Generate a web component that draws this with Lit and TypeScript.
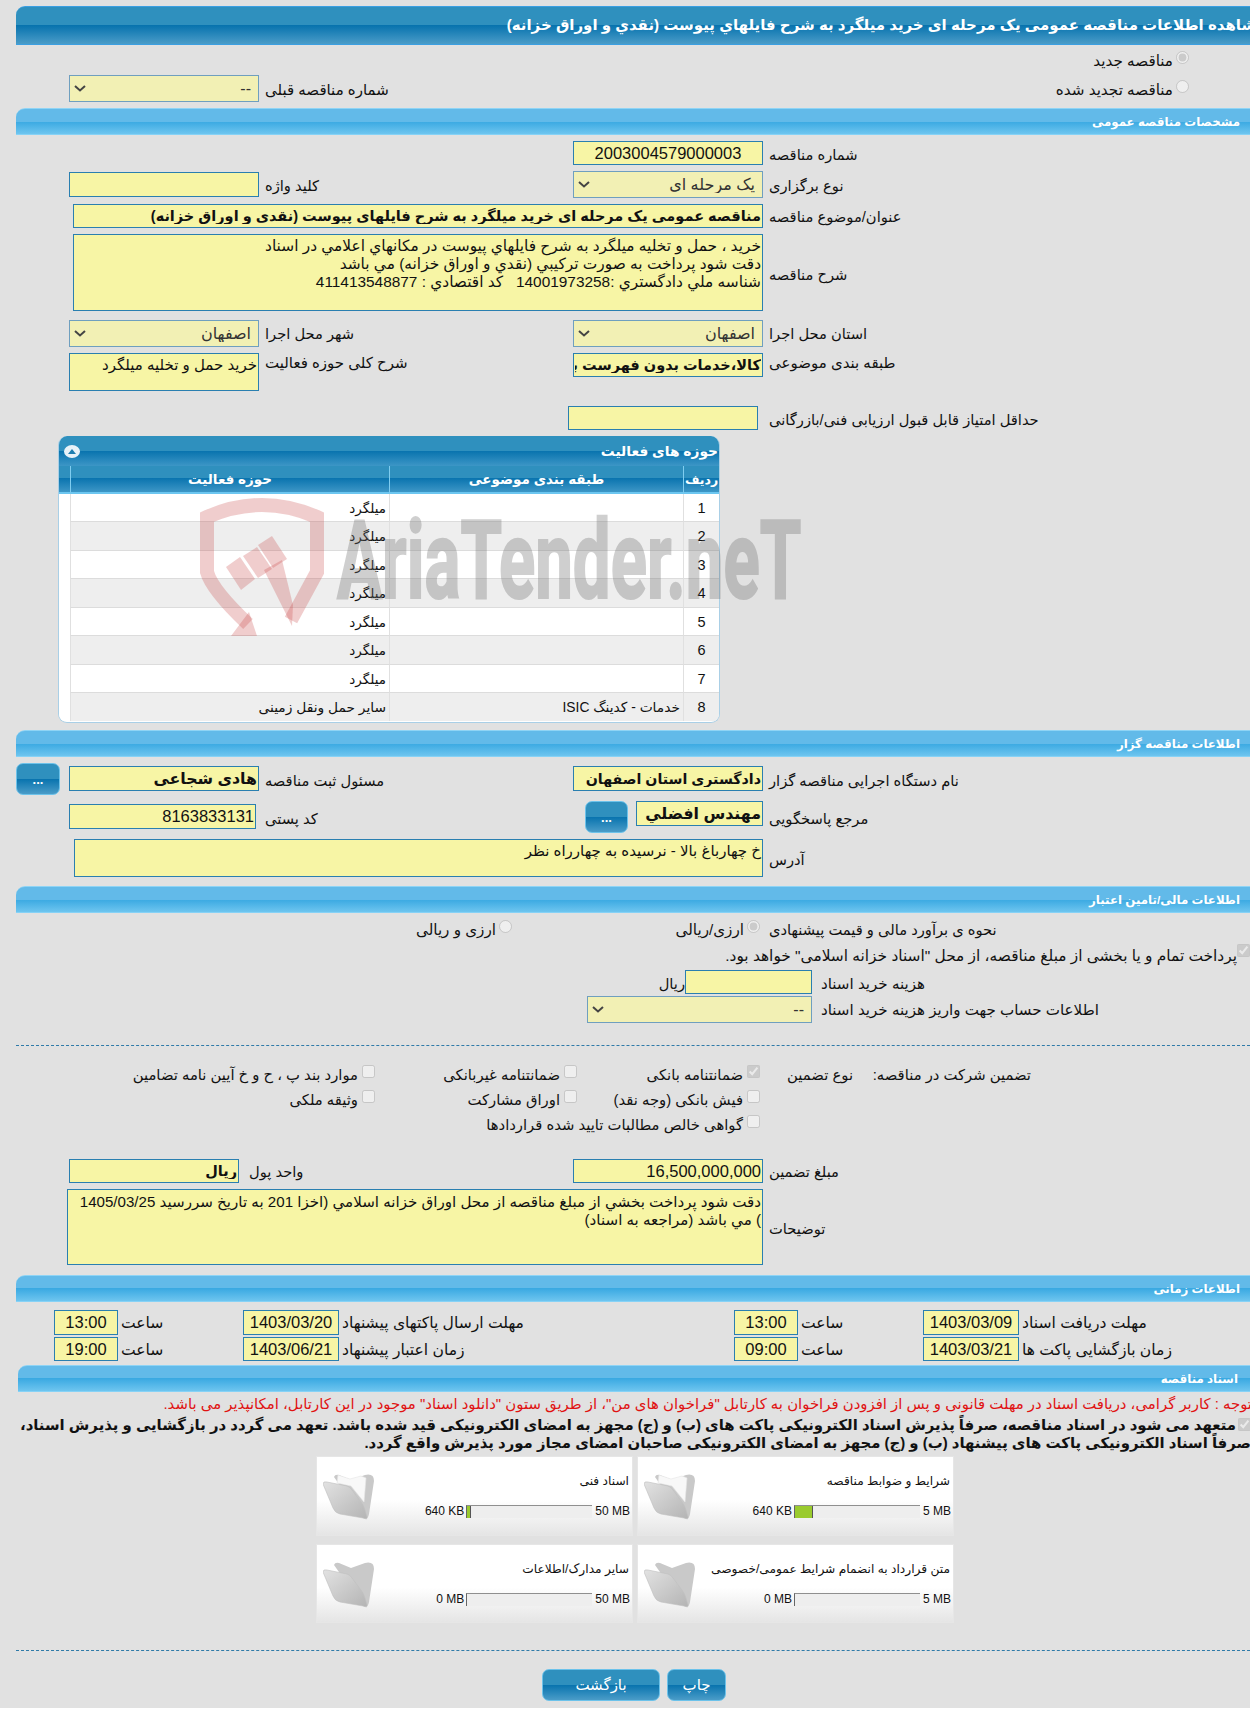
import { LitElement, html, css, svg } from "lit";
import { customElement } from "lit/decorators.js";

const folder = (paper: boolean) => html`<svg class="folder" viewBox="0 0 52 48" width="52" height="48">
  <defs><linearGradient id="fg" x1="0" y1="0" x2="1" y2="1"><stop offset="0" stop-color="#e2e2e2"/><stop offset="1" stop-color="#b4b4b4"/></linearGradient></defs>
  ${svg`<path d="M11 5 Q12 2 16 3 L28 8 L42 3 Q51 1 51 9 L46 42 Q45 48 40 46 Z" fill="#c9c9c9"/>`}
  ${paper ? svg`<path d="M15 3 L27 7 L38 4 L43 6 L41 30 L28 14 L14 11 Z" fill="#f8f8f8" stroke="#e6e6e6" stroke-width=".6"/>` : ""}
  ${svg`<path d="M0 12 Q0 9 4 10 L24 14 Q27 15 29 18 L38 30 Q41 34 42 38 L44 45 Q45 48 40 46 L17 42 Q12 41 10 36 Z" fill="url(#fg)" stroke="#bfbfbf" stroke-width=".6"/>`}
</svg>`;

@customElement("app-root")
export class AppRoot extends LitElement {
  static styles = css`
    :host{display:block;position:relative;width:1250px;height:1708px;overflow:hidden;background:#e1e1e1;color:#111;
      font-family:"Liberation Sans","DejaVu Sans",sans-serif;font-size:14.7px}
    .page{padding-top:6px;height:1702px}
    input,textarea,select,button{font-family:inherit;margin:0;box-sizing:border-box}
    .bar{margin-left:16px;height:27px;box-sizing:border-box;border-radius:9px 0 0 0;direction:rtl;color:#fff;font-weight:700;font-size:11.8px;
      line-height:26px;padding-right:10px;white-space:nowrap;border-top:1px solid #8fd4f5;border-bottom:1px solid #86d2f6;overflow:hidden;
      background:linear-gradient(#62bae9 0,#62bae9 50%,#3aa9e2 50%,#6ec5ef 100%)}
    .bar.main{height:39px;font-size:15px;line-height:36px;padding-right:0;margin-right:-16px;border-top-color:#3b9fe2;border-bottom-color:#3b9fe2;
      background:linear-gradient(#2f90be 0,#2f90be 50%,#0873ae 50%,#4a9cc8 100%)}
    .bar.docs{margin-left:18px;padding-right:12px}
    .mt4{margin-top:4px}.mt7{margin-top:7px}.mt9{margin-top:9px}.mt6{margin-top:6px}.mt10{margin-top:10px}
    .row{display:grid;grid-template-columns:69px 190px 314px 190px 1fr;align-items:start;direction:ltr;margin-top:6px}
    .row.mt9{margin-top:9px}.row.mt15{margin-top:15px}.row.mt19{margin-top:19px}.row.mt0{margin-top:0}
    .row>*{direction:rtl}
    .c1{grid-column:1}.c2{grid-column:2}.c3{grid-column:3}.c4{grid-column:4}.c5{grid-column:5}.span{grid-column:2 / 5}
    .lb{text-align:left;padding:2px 0 0 6px;line-height:24px;height:22px;white-space:nowrap}
    .lb.mid{align-self:center}
    .lb.p1{padding-top:1px}.lb.p3{padding-top:3px}.lb.p6{padding-top:6px}.lb.pm{padding-top:0;margin-top:-2px}
    .inp{display:block;width:100%;height:24px;border:1px solid #2a7fb0;background:#f7f5a5;padding:0 1px;color:#111;outline:none;font-size:14.5px;text-align:right;direction:rtl}
    .inp.h25{height:25px}.top1{margin-top:1px}.top3{margin-top:3px}
    .inp.num{font-size:16.5px}
    .inp.ctr{text-align:center}
    .inp.b{font-weight:700;font-size:14.5px}
    .inp.b.lg{font-size:15.8px}
    .inp.b.org{font-size:14.2px}
    textarea.inp{resize:none;overflow:hidden;line-height:18px;font-size:15.4px;white-space:pre-wrap;display:block;padding:2px 1px}
    textarea.d{height:77px}
    textarea.act{height:38px;font-size:15px}
    textarea.nt{height:76px;padding:3px 1px 0 5px;font-size:15.1px}
    .sel{display:block;width:100%;height:27px;appearance:none;-webkit-appearance:none;border:1px solid #6f9fbf;color:#333;opacity:1;font-size:16px;padding:0 7px 0 20px;
      background:#f2f0b4 url("data:image/svg+xml,%3Csvg xmlns='http://www.w3.org/2000/svg' width='12' height='7'%3E%3Cpath d='M1 1L6 5.5L11 1' fill='none' stroke='%23444' stroke-width='2'/%3E%3C/svg%3E") no-repeat 4px 50%}
    .ind4{margin-left:4px}
    .ad{margin-left:5px}
    .no{margin-left:-2px}
    .shift{margin-left:-5px}
    .pc{padding-right:3px;box-sizing:border-box}
    .unit{width:170px}
    .ul{margin-left:-16px}
    .lb.wide{font-size:15px}
    .rad{display:flex;direction:rtl;align-items:flex-start;white-space:nowrap;font-size:15.2px}
    .rad input{margin:0;width:13px;height:13px;flex:none}
    .rad span{margin-right:3px;line-height:24px;height:20px;margin-top:-2px}
    .radtop{padding:6px 61px 0 0;height:24px}
    .r2 .rad{padding:5px 61px 0 0}
    .btn{display:block;border:1px solid #6cc2ea;border-radius:7px;color:#fff;text-align:center;font-size:13px;padding:0;
      background:linear-gradient(#2f90be 0,#2f90be 50%,#0873ae 50%,#4a9cc8 100%)}
    .dots{width:44px;height:32px;margin-left:16px;font-weight:700}
    .contact{display:flex;direction:ltr;align-items:flex-start;padding-left:12px;gap:8px}
    .contact .dots{margin:0;width:43px;flex:none}
    .contact .inp{direction:rtl}
    .panel{position:relative;margin:6px 0 0 58px;width:662px;height:287px;box-sizing:border-box;border-radius:9px;overflow:hidden;direction:rtl;background:#fff;
      border:1px solid #a9cfe6;border-top:none}
    .cap{height:30px;display:flex;align-items:center;justify-content:space-between;color:#fff;font-weight:700;font-size:13.8px;padding:0 1px 0 5px;
      background:linear-gradient(#2f90be 0,#2f90be 50%,#0873ae 50%,#3d96c6 100%)}
    .tog{width:16px;height:13px;border-radius:50%;background:#e8f2f8;display:flex;align-items:center;justify-content:center}
    .tog i{display:block;width:0;height:0;border:4px solid transparent;border-top:none;border-bottom:5px solid #1f7eb0}
    table{border-collapse:separate;border-spacing:0;table-layout:fixed;width:660px;font-size:13.5px}
    th{height:28px;padding:0;box-sizing:border-box;color:#fff;font-weight:700;border-left:1px solid #7fcdf0;border-bottom:2px solid #6cc6f0;
      background:linear-gradient(#2f90be 0,#2f90be 45%,#0873ae 45%,#3d96c6 100%)}
    th:last-child,td:last-child{border-left:none}
    th.w1{font-size:12.5px}
    td{height:28px;padding:0 3px;box-sizing:border-box;border-left:1px solid #e0e0e0;border-bottom:1px solid #dcdcdc;text-align:right;white-space:nowrap}
    td.n{text-align:center;font-size:14.5px}
    tr:nth-child(even) td{height:29px;background:#eee}
    tr:last-child td{height:28px;border-bottom:none}
    tr td:last-child,tr:nth-child(even) td:last-child{background:#fff;border-bottom:none}
    .w1{width:36px}.w2{width:294px}.w3{width:319px}.w4{width:11px}
    .small{font-size:13.8px}
    .full{direction:rtl;display:flex;align-items:flex-start;white-space:nowrap;height:25px;font-size:15.4px}
    .full input{margin:0;width:13px;height:13px;flex:none}
    .full span{line-height:22px;height:22px;margin-top:1px}
    .fr1{display:grid;grid-template-columns:69px 190px 314px 190px 1fr;margin-top:5px;height:26px;align-items:start;direction:ltr}
    .fr1>*{direction:rtl}
    .fr1 .rad{padding-top:2px}
    .fr1 .rad.a{padding-right:3px}
    .fr1 .rad.b{padding-right:61px}
    .fr1 .lb{padding-top:0}
    .fin{display:grid;grid-template-columns:587px 225px 1fr;align-items:start;direction:ltr}
    .fin>*{direction:rtl}
    .fin .lb{padding-left:9px;font-size:15.1px}
    .fin .col2{grid-column:2}
    .cost{display:flex;align-items:center;height:24px}
    .cost .inp{width:127px;flex:none}
    .cost span{line-height:24px;margin-top:3px}
    .mt1{margin-top:1px}
    .mt2{margin-top:2px}
    .sep{margin:22px 0 0 16px;border-top:1px dashed #2f7aa8;height:0}
    .guar{display:grid;direction:rtl;grid-template-columns:178px 93px 183px 202px 1fr;padding-right:219px;grid-template-rows:25px 25px 25px;margin-top:19px;white-space:nowrap;font-size:14.8px}
    .guar .t{line-height:24px;height:24px;margin-top:-2px}
    .ck{display:flex;align-items:flex-start;height:25px}
    .ck input{margin:0;width:13px;height:13px;flex:none}
    .ck span{margin-right:4px;line-height:24px;height:24px;margin-top:-2px}
    .times{display:grid;direction:ltr;grid-template-columns:54px 64px 125px 96px 395px 64px 125px 96px 1fr;margin-top:8px;grid-template-rows:25px 24px;row-gap:2px;align-items:start}
    .times>*{direction:rtl}
    .times .inp{height:100%;font-size:16.5px;text-align:center;padding:0}
    .times .lb{padding:0 0 0 3px;line-height:25px;height:24px;font-size:15.6px}
    .g2{grid-column:2}.g3{grid-column:3}.g4{grid-column:4}.g5{grid-column:5}.g6{grid-column:6}.g7{grid-column:7}.g8{grid-column:8}.g9{grid-column:9}
    .red{color:#e01212;direction:rtl;white-space:nowrap;line-height:20px;height:20px;margin:2px -2px 0 0;font-size:14.9px}
    .consent{direction:rtl;margin:2px -1px 0 0;height:36px;font-weight:700;font-size:14.9px;line-height:18px;white-space:nowrap}
    .consent input{margin:0 0 0 2px;width:13px;height:13px;vertical-align:-1px}
    .cards{display:grid;direction:rtl;grid-template-columns:317px 317px;grid-template-rows:80px 79px;gap:8px 4px;margin:4px 0 0 316px;width:638px}
    .card{display:grid;grid-template-columns:1fr 56px;box-sizing:border-box;border:1px solid #e6e6e6;background:linear-gradient(#fff 0,#fff 55%,#e5e5e5 100%);padding:0 2px}
    .cbody{padding-top:14px;min-width:0}
    .ctitle{font-size:12.2px;line-height:20px;height:20px;text-align:right;white-space:nowrap;margin-right:1px}
    .prog{display:flex;direction:ltr;justify-content:flex-end;align-items:center;margin-top:13px;font-size:12px;height:14px;white-space:nowrap}
    .bar2{width:126px;height:13px;box-sizing:border-box;margin:0 3px 0 2px;background:#eee;border-top:1px solid #8f8f8f;border-left:1px solid #666;flex:none;display:flex}
    .fill{height:100%;background:#9acb2e;border-right:1px solid #555;box-sizing:border-box}
    .f1{width:18px}.f2{width:4px}
    .folder{margin-top:15px;display:block}
    .sep2{margin-top:27px}
    .foot{display:flex;gap:7px;margin:18px 0 0 542px}
    .foot .btn{height:32px;font-size:15px}
    .back{width:118px}.print{width:59px}
    .wm{position:absolute;left:0;top:0;pointer-events:none}
    .wmshield{position:absolute;left:190px;top:490px}
    .wmtext{position:absolute;left:337px;top:502px;font-family:"Roboto","Liberation Sans",sans-serif;font-weight:700;font-size:98px;line-height:118px;color:#6e6e6e;opacity:.32;
      -webkit-text-stroke:2px #6e6e6e;transform-origin:0 50%;transform:scale(.685,1.12);white-space:nowrap;direction:ltr}
  `;

  render() {
    const rows = Array.from({ length: 7 }, (_, i) => i + 1);
    const card = (t: string, s: string, cap: string, fill: string, paper: boolean) => html`<div class="card">
      <div class="cbody"><div class="ctitle">${t}</div>
        <div class="prog"><span>${s}</span><div class="bar2">${fill ? html`<div class="fill ${fill}"></div>` : ""}</div><span>${cap}</span></div>
      </div>
      ${folder(paper)}
    </div>`;
    const ck = (t: string, c = false) => html`<label class="ck"><input type="checkbox" disabled ?checked=${c}><span>${t}</span></label>`;
    return html`<div class="page">
      <div class="bar main">مشاهده اطلاعات مناقصه عمومی یک مرحله ای خرید میلگرد به شرح فایلهاي پیوست (نقدي و اوراق خزانه)</div>
      <label class="rad radtop"><input type="radio" disabled checked><span>مناقصه جدید</span></label>
      <div class="row r2 mt0">
        <select class="sel c2" disabled><option>--</option></select>
        <div class="lb c3 p3 wide">شماره مناقصه قبلی</div>
        <label class="rad c5"><input type="radio" disabled><span>مناقصه تجدید شده</span></label>
      </div>
      <div class="bar mt6">مشخصات مناقصه عمومی</div>

      <div class="row"><input class="inp num ctr c4" readonly value="2003004579000003"><div class="lb c5">شماره مناقصه</div></div>
      <div class="row">
        <input class="inp h25 c2 top1" readonly>
        <div class="lb c3 p3">کلید واژه</div>
        <select class="sel c4" disabled><option>یک مرحله ای</option></select>
        <div class="lb c5 p3">نوع برگزاری</div>
      </div>
      <div class="row">
        <div class="span ind4"><input class="inp b" readonly value="مناقصه عمومی یک مرحله ای خرید میلگرد به شرح فایلهاي پیوست (نقدي و اوراق خزانه)"></div>
        <div class="lb c5 p1">عنوان/موضوع مناقصه</div>
      </div>
      <div class="row">
        <div class="span ind4"><textarea class="inp d" readonly>خرید ، حمل و تخلیه میلگرد به شرح فایلهاي پیوست در مکانهاي اعلامي در اسناد
دقت شود پرداخت به صورت ترکیبي (نقدي و اوراق خزانه) مي باشد
شناسه ملي دادگستري :14001973258   کد اقتصادي : 411413548877</textarea></div>
        <div class="lb mid c5">شرح مناقصه</div>
      </div>
      <div class="row mt9">
        <select class="sel c2" disabled><option>اصفهان</option></select>
        <div class="lb c3">شهر محل اجرا</div>
        <select class="sel c4" disabled><option>اصفهان</option></select>
        <div class="lb c5">استان محل اجرا</div>
      </div>
      <div class="row">
        <textarea class="inp act c2" readonly>خرید حمل و تخلیه میلگرد</textarea>
        <div class="lb c3 pm wide">شرح کلی حوزه فعالیت</div>
        <input class="inp b c4" readonly value="کالا،خدمات بدون فهرست بها">
        <div class="lb c5 pm wide">طبقه بندی موضوعی</div>
      </div>
      <div class="row mt15">
        <input class="inp c4 shift" readonly>
        <div class="lb c5">حداقل امتیاز قابل قبول ارزیابی فنی/بازرگانی</div>
      </div>

      <div class="panel">
        <div class="cap"><span>حوزه های فعالیت</span><span class="tog"><i></i></span></div>
        <table>
          <thead><tr><th class="w1">ردیف</th><th class="w2">طبقه بندی موضوعی</th><th class="w3">حوزه فعالیت</th><th class="w4"></th></tr></thead>
          <tbody>
            ${rows.map((n) => html`<tr><td class="n">${n}</td><td></td><td>میلگرد</td><td></td></tr>`)}
            <tr><td class="n">8</td><td class="small">خدمات - کدینگ ISIC</td><td class="small">سایر حمل ونقل زمینی</td><td></td></tr>
          </tbody>
        </table>
      </div>

      <div class="bar mt7">اطلاعات مناقصه گزار</div>
      <div class="row">
        <button class="btn dots c1" type="button">...</button>
        <input class="inp b lg h25 c2 top3" readonly value="هادی شجاعی">
        <div class="lb c3 p6">مسئول ثبت مناقصه</div>
        <input class="inp b org h25 c4 top3" readonly value="دادگستری استان اصفهان">
        <div class="lb c5 p6">نام دستگاه اجرایی مناقصه گزار</div>
      </div>
      <div class="row">
        <div class="c2 pc"><input class="inp num h25 top3" readonly value="8163833131"></div>
        <div class="lb c3 p6">کد پستی</div>
        <div class="c4 contact">
          <button class="btn dots" type="button">...</button>
          <input class="inp b lg h25" readonly value="مهندس افضلي">
        </div>
        <div class="lb c5 p6">مرجع پاسخگویی</div>
      </div>
      <div class="row">
        <div class="span ad"><textarea class="inp act" readonly>خ چهارباغ بالا - نرسیده به چهارراه نظر</textarea></div>
        <div class="lb mid c5">آدرس</div>
      </div>

      <div class="bar mt9">اطلاعات مالی/تامین اعتبار</div>
      <div class="fr1">
        <label class="rad b c3"><input type="radio" disabled><span>ارزی و ریالی</span></label>
        <label class="rad a c4"><input type="radio" disabled checked><span>ارزی/ریالی</span></label>
        <div class="lb c5">نحوه ی برآورد مالی و قیمت پیشنهادی</div>
      </div>
      <label class="full"><input type="checkbox" disabled checked><span>پرداخت تمام و یا بخشی از مبلغ مناقصه، از محل "اسناد خزانه اسلامی" خواهد بود.</span></label>
      <div class="fin mt1">
        <div class="cost col2"><input class="inp" readonly><span>ریال</span></div>
        <div class="lb">هزینه خرید اسناد</div>
      </div>
      <div class="fin mt2">
        <select class="sel col2" disabled><option>--</option></select>
        <div class="lb">اطلاعات حساب جهت واریز هزینه خرید اسناد</div>
      </div>
      <div class="sep"></div>
      <div class="guar">
        <div class="t">تضمین شرکت در مناقصه:</div><div class="t">نوع تضمین</div>
        ${ck("ضمانتنامه بانکی", true)}${ck("ضمانتنامه غیربانکی")}${ck("موارد بند پ ، ح و خ آیین نامه تضامین")}
        <div></div><div></div>
        ${ck("فیش بانکی (وجه نقد)")}${ck("اوراق مشارکت")}${ck("وثیقه ملکی")}
        <div></div><div></div>
        ${ck("گواهی خالص مطالبات تایید شده قراردادها")}
      </div>
      <div class="row mt19">
        <div class="c2 unit"><input class="inp b" readonly value="ریال"></div>
        <div class="lb c3 ul p1">واحد پول</div>
        <input class="inp num c4" readonly value="16,500,000,000">
        <div class="lb c5 p1">مبلغ تضمین</div>
      </div>
      <div class="row">
        <div class="span no"><textarea class="inp nt" readonly>دقت شود پرداخت بخشي از مبلغ مناقصه از محل اوراق خزانه اسلامي (اخزا 201 به تاریخ سررسید 1405/03/25 ) مي باشد (مراجعه به اسناد)</textarea></div>
        <div class="lb mid c5">توضیحات</div>
      </div>

      <div class="bar mt10">اطلاعات زمانی</div>
      <div class="times">
        <input class="inp g2" readonly value="13:00"><div class="lb g3">ساعت</div>
        <input class="inp g4" readonly value="1403/03/20"><div class="lb g5">مهلت ارسال پاکتهای پیشنهاد</div>
        <input class="inp g6" readonly value="13:00"><div class="lb g7">ساعت</div>
        <input class="inp g8" readonly value="1403/03/09"><div class="lb g9">مهلت دریافت اسناد</div>
        <input class="inp g2" readonly value="19:00"><div class="lb g3">ساعت</div>
        <input class="inp g4" readonly value="1403/06/21"><div class="lb g5">زمان اعتبار پیشنهاد</div>
        <input class="inp g6" readonly value="09:00"><div class="lb g7">ساعت</div>
        <input class="inp g8" readonly value="1403/03/21"><div class="lb g9">زمان بازگشایی پاکت ها</div>
      </div>

      <div class="bar docs mt4">اسناد مناقصه</div>
      <div class="red">توجه : کاربر گرامی، دریافت اسناد در مهلت قانونی و پس از افزودن فراخوان به کارتابل "فراخوان های من"، از طریق ستون "دانلود اسناد" موجود در این کارتابل، امکانپذیر می باشد.</div>
      <div class="consent"><input type="checkbox" disabled checked>متعهد می شود در اسناد مناقصه، صرفاً پذیرش اسناد الکترونیکی پاکت های (ب) و (ج) مجهز به امضای الکترونیکی قید شده باشد. تعهد می گردد در بازگشایی و پذیرش اسناد،<br>صرفاً اسناد الکترونیکی پاکت های پیشنهاد (ب) و (ج) مجهز به امضای الکترونیکی صاحبان امضای مجاز مورد پذیرش واقع گردد.</div>
      <div class="cards">
        ${card("شرایط و ضوابط مناقصه", "640 KB", "5 MB", "f1", true)}
        ${card("اسناد فنی", "640 KB", "50 MB", "f2", true)}
        ${card("متن قرارداد به انضمام شرایط عمومی/خصوصی", "0 MB", "5 MB", "", false)}
        ${card("سایر مدارک/اطلاعات", "0 MB", "50 MB", "", false)}
      </div>
      <div class="sep sep2"></div>
      <div class="foot">
        <button class="btn back" type="button">بازگشت</button>
        <button class="btn print" type="button">چاپ</button>
      </div>
    </div>
    <div class="wm">
      <svg class="wmshield" width="150" height="150" viewBox="190 490 150 150">
        <g fill="none" stroke="rgba(200,70,70,.27)" stroke-width="14">
          <path d="M291 620 L317 572 L317 517 Q262 493 207 517 L207 572 Q212 590 248 624"/>
        </g>
        <g fill="rgba(200,70,70,.27)">
          <path d="M264 570 L282 560 L293 605 L292 626 Z"/>
          <path d="M258 545 L272 536 L287 559 L273 568 Z"/>
          <path d="M243 556 L257 547 L272 569 L258 578 Z"/>
          <path d="M226 567 L240 557 L255 579 L241 590 Z"/>
          <path d="M249 612 L257 636 L231 636 Z"/>
        </g>
      </svg>
      <div class="wmtext">AriaTender.neT</div>
    </div>`;
  }
}
